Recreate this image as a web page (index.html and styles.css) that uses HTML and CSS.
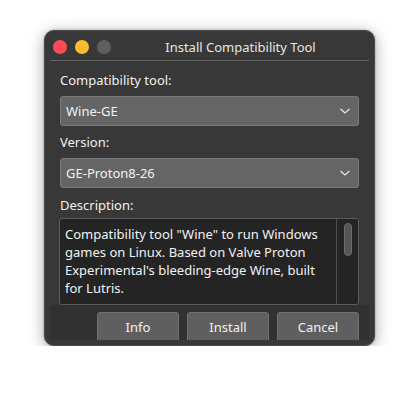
FILE: index.html
```html
<!DOCTYPE html>
<html>
<head>
  <title>Install Compatibility Tool</title>
  <link rel="stylesheet" href="styles.css">
</head>
<body>
  <div class="window">
    <div class="titlebar">
      <div class="lights">
        <span class="light red"></span>
        <span class="light yellow"></span>
        <span class="light grey"></span>
      </div>
      <div class="title">Install Compatibility Tool</div>
    </div>
    <div class="rule"></div>

    <div class="content">
      <label class="field-label">Compatibility tool:</label>
      <div class="combo">
        <span>Wine-GE</span>
        <svg class="chevron" width="12" height="8" viewBox="0 0 12 8"><path d="M1.5 2 L6 6 L10.5 2" fill="none" stroke="#e6e6e6" stroke-width="1.3"/></svg>
      </div>

      <label class="field-label">Version:</label>
      <div class="combo">
        <span>GE-Proton8-26</span>
        <svg class="chevron" width="12" height="8" viewBox="0 0 12 8"><path d="M1.5 2 L6 6 L10.5 2" fill="none" stroke="#e6e6e6" stroke-width="1.3"/></svg>
      </div>

      <label class="field-label desc-label">Description:</label>
      <div class="description">
        <div class="desc-text">Compatibility tool "Wine" to run Windows games on Linux. Based on Valve Proton Experimental's bleeding-edge Wine, built for Lutris.</div>
        <div class="scrollbar"><div class="handle"></div></div>
      </div>
    </div>

    <div class="buttons">
      <button class="btn">Info</button>
      <button class="btn">Install</button>
      <button class="btn">Cancel</button>
    </div>
  </div>
</body>
</html>
```

FILE: styles.css
```css
body {
  margin: 0;
  padding: 30px 0 0 44px;
  background: #ffffff;
  font-family: "Noto Sans", "Open Sans", sans-serif;
  font-size: 13px;
}
.window {
  width: 331px;
  height: 316px;
  box-sizing: border-box;
  background: #383838;
  border: 1px solid #4a4a4a;
  border-radius: 10px;
  box-shadow: 0 3px 16px rgba(0,0,0,0.35), 0 0 2px rgba(0,0,0,0.4);
  overflow: hidden;
  display: flex;
  flex-direction: column;
}
.titlebar {
  height: 29px;
  display: flex;
  align-items: center;
}
.lights {
  display: flex;
  gap: 8px;
  padding-left: 8px;
  padding-top: 2px;
}
.light {
  width: 14px;
  height: 14px;
  border-radius: 50%;
}
.red { background: #fb4b5a; }
.yellow { background: #fdbb2d; }
.grey { background: #5f5f5f; }
.title {
  flex: 1;
  text-align: center;
  color: #e6e6e6;
  padding-right: 4px;
  padding-top: 2px;
}
.rule {
  height: 1px;
  background: #636363;
  margin: 0 5px;
}
.content {
  padding: 10px 15px 0 14px;
  display: flex;
  flex-direction: column;
}
.field-label {
  display: block;
  color: #f0f0f0;
  line-height: 18px;
  margin-bottom: 7px;
  padding-left: 1px;
}
.combo {
  height: 30px;
  box-sizing: border-box;
  margin-left: 1px;
  background: #656565;
  border: 1px solid #7c7c7c;
  border-radius: 3px;
  color: #f2f2f2;
  display: flex;
  align-items: center;
  justify-content: space-between;
  padding: 0 6px 0 5px;
  margin-bottom: 7px;
}
.chevron {
  margin-right: 1px;
}
.desc-label {
  margin-top: 1px;
  margin-bottom: 4px;
}
.description {
  height: 87px;
  box-sizing: border-box;
  background: #242424;
  border: 1px solid #5c5c5c;
  border-radius: 3px;
  display: flex;
}
.desc-text {
  flex: 1;
  color: #f2f2f2;
  line-height: 18px;
  padding: 6px 4px 0 5px;
}
.scrollbar {
  width: 21px;
  border-left: 1px solid #505050;
  display: flex;
  justify-content: center;
  padding-top: 4px;
}
.handle {
  width: 6px;
  height: 31px;
  background: #555555;
  border: 1px solid #6e6e6e;
  border-radius: 4px;
}
.buttons {
  flex: 1;
  margin: 0 5px 5px 5px;
  background: #313131;
  display: flex;
  justify-content: flex-end;
  gap: 8px;
  padding: 7px 10px 0 0;
  overflow: hidden;
}
.btn {
  width: 82px;
  height: 34px;
  flex: none;
  background: #5f5f5f;
  border: 1px solid #727272;
  border-radius: 3px;
  color: #f2f2f2;
  font-family: inherit;
  font-size: 13px;
  padding: 0 0 4px 0;
}
```
